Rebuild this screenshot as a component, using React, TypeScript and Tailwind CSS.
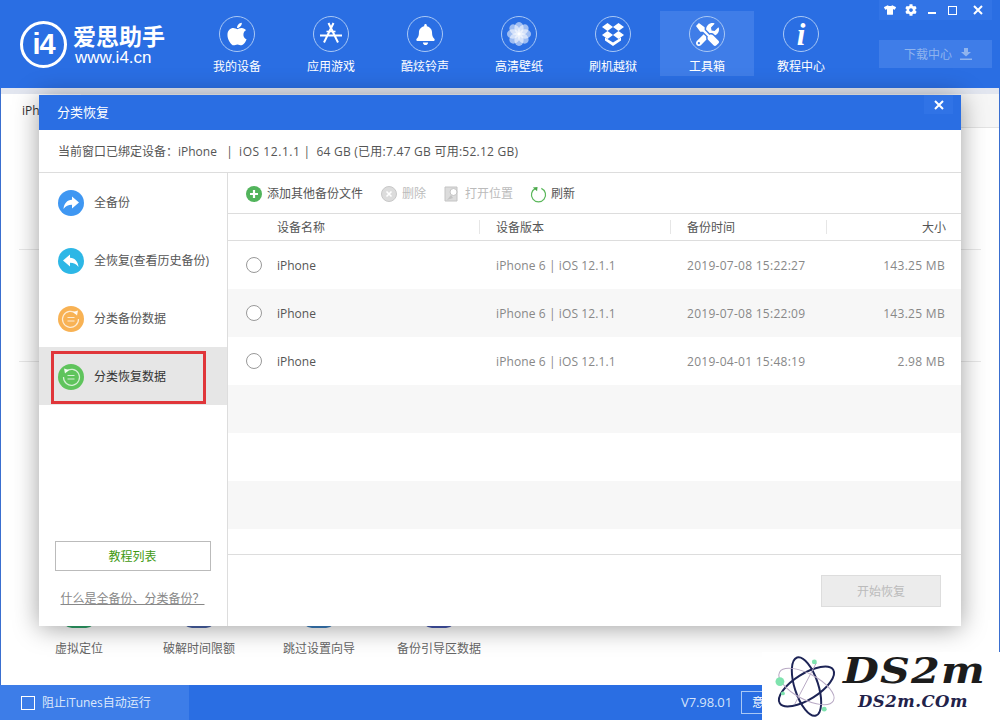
import React from "react";
import { FaApple, FaBell, FaTshirt, FaCog, FaTools } from "react-icons/fa";

const Flower = () => (
  <svg viewBox="0 0 28 28" className="w-[26px] h-[26px]">
    {[0, 45, 90, 135, 180, 225, 270, 315].map((a) => (
      <ellipse key={a} cx="14" cy="7.5" rx="5" ry="6.5" fill="#fff" fillOpacity="0.55" transform={`rotate(${a} 14 14)`} />
    ))}
    <circle cx="14" cy="14" r="1.6" fill="#fff" />
  </svg>
);
const AppStore = () => (
  <svg viewBox="0 0 28 28" className="w-[28px] h-[28px]" fill="none" stroke="#fff" strokeWidth="2">
    <path d="M16.5 3 7 22.5M11.5 3 21 22.5M3 15.5h22" />
    <path d="M9.5 11.5h9" strokeWidth="1.6" />
  </svg>
);
const Box = () => (
  <svg viewBox="0 0 28 28" className="w-[28px] h-[28px]" fill="#fff">
    <path d="M8.5 3 14 7l-5.5 4L3 7zM19.5 3 25 7l-5.5 4L14 7zM3 15l5.5-4L14 15l-5.500 4zM25 15l-5.500-4L14 15l5.500 4z" />
    <path d="M6 20.500v-3l8 5 8-5v3L14 26z" />
  </svg>
);
const Info = () => (
  <span className="text-white italic font-bold text-[31px] leading-none font-['Liberation_Serif',serif]">i</span>
);

const nav: [React.ReactNode, string][] = [
  [<FaApple className="text-white text-[26px]" />, "我的设备"],
  [<AppStore />, "应用游戏"],
  [<FaBell className="text-white text-[21px]" />, "酷炫铃声"],
  [<Flower />, "高清壁纸"],
  [<Box />, "刷机越狱"],
  [<FaTools className="text-white text-[23px]" />, "工具箱"],
  [<Info />, "教程中心"],
];

const Ring = ({ color, flip }: { color: string; flip?: boolean }) => (
  <svg viewBox="0 0 26 26" className="w-[26px] h-[26px] shrink-0">
    <circle cx="13" cy="13" r="13" fill={color} />
    <g fill="none" stroke="#fff" strokeOpacity="0.75" strokeWidth="1.2" transform={flip ? "" : "scale(-1 1) translate(-26 0)"}>
      <path d="M8 7.500A8 8 0 1 1 5.500 13" />
      <path d="M9.500 11.500h7M9.500 15h7" />
    </g>
    <path d={flip ? "M6 4.500l5 1.500-4 3.500z" : "M20 4.500l-5 1.500 4 3.500z"} fill="#fff" fillOpacity="0.9" />
  </svg>
);
const ArrowIcon = ({ color, left }: { color: string; left?: boolean }) => (
  <svg viewBox="0 0 26 26" className="w-[26px] h-[26px] shrink-0">
    <circle cx="13" cy="13" r="13" fill={color} />
    <path
      d="M14 6.500l7 6-7 6v-3.700c-3.800 0-6.300 1.200-8.500 4.200.5-5.500 3.500-9 8.500-9.300z"
      fill="#fff"
      transform={left ? "scale(-1 1) translate(-26 0)" : ""}
    />
  </svg>
);

const side: [React.ReactNode, string, boolean][] = [
  [<ArrowIcon color="#3f97f2" />, "全备份", false],
  [<ArrowIcon color="#2db7e6" left />, "全恢复(查看历史备份)", false],
  [<Ring color="#f8b254" />, "分类备份数据", false],
  [<Ring color="#5fc45c" flip />, "分类恢复数据", true],
];

const rows = [
  ["iPhone", "iPhone 6 | iOS 12.1.1", "2019-07-08 15:22:27", "143.25 MB"],
  ["iPhone", "iPhone 6 | iOS 12.1.1", "2019-07-08 15:22:09", "143.25 MB"],
  ["iPhone", "iPhone 6 | iOS 12.1.1", "2019-04-01 15:48:19", "2.98 MB"],
  null,
  null,
  null,
];

const COLS = "grid grid-cols-[252px_191px_156px_134px]";

export default function App() {
  return (
    <div className="relative w-[1000px] h-[720px] overflow-hidden bg-white flex flex-col text-[12px] text-[#666] font-['Open_Sans','Noto_Sans_CJK_SC',sans-serif]">
      {/* header */}
      <header className="relative h-[88px] shrink-0 bg-[#2a6ee3] flex">
        <div className="w-[190px] shrink-0 flex items-center pl-[20px] pt-[1px] text-white">
          <div className="w-[47px] h-[47px] rounded-full border-[3px] border-white flex items-center justify-center shrink-0">
            <span className="text-[29px] font-bold leading-none font-['Liberation_Sans',sans-serif] tracking-[-1px]">i4</span>
          </div>
          <div className="ml-[6px] flex flex-col">
            <span className="text-[23px] font-bold leading-[26px] whitespace-nowrap font-['Noto_Sans_CJK_SC',sans-serif]">爱思助手</span>
            <span className="text-[17px] leading-[19px] ml-[2px] font-['Liberation_Sans',sans-serif] whitespace-nowrap">www.i4.cn</span>
          </div>
        </div>
        <nav className="flex">
          {nav.map(([icon, label], i) => (
            <div key={label} className={`w-[94px] h-[65px] mt-[11px] flex flex-col items-center ${i === 5 ? "bg-[#3f7de8]" : ""}`}>
              <div className="mt-[5px] w-[36px] h-[36px] rounded-full border border-[#a9c8f5] flex items-center justify-center">{icon}</div>
              <span className="mt-[6px] text-[12px] leading-[18px] text-white whitespace-nowrap">{label}</span>
            </div>
          ))}
        </nav>
        <div className="absolute left-[879px] top-0 w-[113px]">
          <div className="h-[20px] flex bg-[#3274e6] text-white">
            <span className="w-[21px] flex items-center justify-center"><FaTshirt className="text-[12px]" /></span>
            <span className="w-[21px] flex items-center justify-center"><FaCog className="text-[12px]" /></span>
            <span className="w-[21px] flex items-center justify-center"><span className="w-[8px] h-[2px] bg-white mt-[6px]" /></span>
            <span className="w-[21px] flex items-center justify-center"><span className="w-[9px] h-[9px] border-[1.500px] border-white" /></span>
            <span className="flex-1 flex items-center justify-center">
              <svg viewBox="0 0 10 10" className="w-[10px] h-[10px]" stroke="#fff" strokeWidth="2"><path d="M1 1l8 8M9 1l-8 8" /></svg>
            </span>
          </div>
          <div className="mt-[20px] h-[28px] bg-[#3f7de8] flex items-center justify-center gap-[8px] pl-[5px] text-[#8fb4ee]">
            <span className="text-[12px] pt-[2px]">下载中心</span>
            <svg viewBox="0 0 12 12" className="w-[12px] h-[12px]" fill="#8fb4ee"><path d="M4 0h4v4h3L6 8.500 1 4h3zM0 10.500h12V12H0z" /></svg>
          </div>
        </div>
      </header>

      {/* page behind */}
      <main className="flex-1 min-h-0 flex flex-col border-x border-[#3a6fd0]">
        <div className="h-[6px] bg-[#e2e6f0] shrink-0" />
        <div className="h-[34px] shrink-0 bg-[#f6f6f6] border-b border-[#e3e3e3]">
          <div className="w-[80px] h-[34px] bg-white pl-[21px] flex items-center text-[#333]">iPhone</div>
        </div>
        <div className="h-[122px] shrink-0 border-b border-[#e8e8e8] mx-[18px]" />
        <div className="h-[112px] shrink-0 border-b border-[#e8e8e8] mx-[18px]" />
        <div className="mt-[234px] grid grid-cols-[120px_120px_120px_120px] pl-[18px]">
          {[
            ["虚拟定位", "#2fa56b"],
            ["破解时间限额", "#4a63a8"],
            ["跳过设置向导", "#3b7fc0"],
            ["备份引导区数据", "#4557b0"],
          ].map(([t, c]) => (
            <div key={t} className="flex flex-col items-center">
              <div className="w-[34px] h-[32px] rounded-[10px]" style={{ background: c }} />
              <span className="mt-[12px] leading-[18px] text-[#666] whitespace-nowrap">{t}</span>
            </div>
          ))}
        </div>
      </main>

      {/* footer */}
      <footer className="h-[35px] shrink-0 bg-[#2a6ee3] flex items-center text-white">
        <div className="w-[189px] h-full bg-[#3d7de8] flex items-center pl-[21px]">
          <span className="w-[14px] h-[14px] border border-white" />
          <span className="ml-[7px] text-[#dce8fb] whitespace-nowrap">阻止iTunes自动运行</span>
        </div>
        <div className="ml-auto flex items-center mr-[179px]">
          <span className="text-[#d5e3fa] text-[13px] tracking-[-0.1px]">V7.98.01</span>
          <span className="ml-[9px] w-[80px] h-[23px] border border-[#a9c8f5] flex items-center pl-[10px] whitespace-nowrap">意见反馈</span>
        </div>
      </footer>

      {/* dialog */}
      <section className="absolute left-[39px] top-[95px] w-[922px] h-[531px] bg-white flex flex-col shadow-[0_2px_24px_rgba(0,0,0,0.38)]">
        <div className="relative h-[35px] shrink-0 bg-[#2a6ee3] flex items-center pl-[18px] text-white text-[13px]">
          分类恢复
          <div className="absolute right-[8px] top-0 w-[29px] h-[19px] bg-[#3073e6] flex items-center justify-center">
            <svg viewBox="0 0 10 10" className="w-[10px] h-[10px]" stroke="#fff" strokeWidth="2"><path d="M1 1l8 8M9 1l-8 8" /></svg>
          </div>
        </div>
        <div className="h-[43px] shrink-0 border-b border-[#ddd] flex items-center pl-[19px] pt-[2px] text-[#555] whitespace-pre">
          <span>当前窗口已绑定设备：iPhone   |  </span>
          <span className="tracking-[0.55px]">iOS 12.1.1</span>
          <span> |  </span>
          <span className="tracking-[0.25px]">64 GB (已用:7.47 GB 可用:52.12 GB)</span>
        </div>
        <div className="flex-1 min-h-0 flex">
          {/* sidebar */}
          <aside className="w-[189px] shrink-0 border-r border-[#ddd] flex flex-col">
            {side.map(([icon, t, active]) => (
              <div key={t} className={`h-[58px] shrink-0 flex items-center pl-[19px] pt-[2px] gap-[10px] whitespace-nowrap ${active ? "bg-[#e6e6e6] text-[#333]" : "text-[#555]"}`}>
                {icon}
                <span>{t}</span>
              </div>
            ))}
            <div className="mt-auto mb-[18px] flex flex-col items-center">
              <div className="w-[156px] h-[30px] ml-[-1px] pt-[2px] border border-[#bbb] flex items-center justify-center text-[#3f9a12]">教程列表</div>
              <span className="mt-[19px] ml-[-1px] leading-[18px] text-[#888] underline whitespace-nowrap">什么是全备份、分类备份？</span>
            </div>
          </aside>
          {/* right */}
          <div className="flex-1 min-w-0 flex flex-col">
            <div className="h-[41px] shrink-0 border-b border-[#ddd] flex items-center pl-[18px] pt-[2px] whitespace-nowrap">
              <svg viewBox="0 0 16 16" className="w-[16px] h-[16px]"><circle cx="8" cy="8" r="8" fill="#52b45c" /><path d="M8 4v8M4 8h8" stroke="#fff" strokeWidth="2.200" /></svg>
              <span className="ml-[5px] text-[#555]">添加其他备份文件</span>
              <svg viewBox="0 0 16 16" className="ml-[18px] w-[16px] h-[16px]"><circle cx="8" cy="8" r="7.500" fill="#dcdcdc" stroke="#c8c8c8" /><path d="M5.500 5.500l5 5M10.500 5.500l-5 5" stroke="#fff" strokeWidth="1.600" /></svg>
              <span className="ml-[5px] text-[#bbb]">删除</span>
              <svg viewBox="0 0 16 16" className="ml-[18px] w-[16px] h-[16px]"><path d="M1 1h12v14H1z" fill="#dcdcdc" stroke="#c4c4c4" /><circle cx="9.500" cy="6" r="3.500" fill="#fff" stroke="#c4c4c4" /><path d="M3 14l4-5 2 3z" fill="#c4c4c4" /></svg>
              <span className="ml-[5px] text-[#bbb]">打开位置</span>
              <svg viewBox="0 0 18 18" className="ml-[17px] w-[17px] h-[17px]" fill="none"><path d="M6 2.500A7.500 7.500 0 1 0 12 2.500" stroke="#5cb85c" strokeWidth="1.300" /><path d="M3 1.500l5-.5-.5 4.500z" fill="#4aa84a" /></svg>
              <span className="ml-[4px] text-[#555]">刷新</span>
            </div>
            <div className={`${COLS} h-[27px] pt-[2px] shrink-0 border-b border-[#ddd] items-center text-[#555]`}>
              <div className="pl-[49px] relative h-full flex items-center">设备名称<i className="absolute right-0 top-[4px] h-[14px] w-px bg-[#e6e6e6]" /></div>
              <div className="pl-[16px] relative h-full flex items-center">设备版本<i className="absolute right-0 top-[4px] h-[14px] w-px bg-[#e6e6e6]" /></div>
              <div className="pl-[16px] relative h-full flex items-center">备份时间<i className="absolute right-0 top-[4px] h-[14px] w-px bg-[#e6e6e6]" /></div>
              <div className="pr-[15px] text-right">大小</div>
            </div>
            {rows.map((r, i) => (
              <div key={i} className={`${COLS} h-[48px] pt-[2px] shrink-0 items-center ${i % 2 === 1 ? "bg-[#f7f7f7]" : "bg-white"}`}>
                {r && (
                  <>
                    <div className="flex items-center pl-[18px]">
                      <span className="w-[16px] h-[16px] mt-[-2px] rounded-full border border-[#999] bg-white" />
                      <span className="ml-[15px] text-[#555]">{r[0]}</span>
                    </div>
                    <div className="pl-[16px] text-[#888] tracking-[0.1px]">{r[1]}</div>
                    <div className="pl-[16px] text-[#888] tracking-[0.27px]">{r[2]}</div>
                    <div className="pr-[16px] text-right text-[#888] tracking-[0.3px]">{r[3]}</div>
                  </>
                )}
              </div>
            ))}
            <div className="mt-[25px] flex-1 border-t border-[#ddd] flex justify-end items-start pt-[20px] pr-[20px]">
              <div className="w-[120px] h-[32px] pt-[2px] bg-[#ececec] border border-[#ddd] flex items-center justify-center text-[#bbb]">开始恢复</div>
            </div>
          </div>
        </div>
      </section>

      {/* annotation */}
      <div className="absolute left-[51px] top-[351px] w-[155px] h-[53px] border-[3px] border-[#e0363a]" />

      {/* watermark */}
      <div className="absolute left-[762px] top-[652px] w-[238px] h-[68px] bg-white flex">
        <svg viewBox="0 0 64 64" className="ml-[13px] mt-[3px] w-[63px] h-[63px] shrink-0" fill="none">
          <g stroke="#1d2456" strokeWidth="2">
            <ellipse cx="32" cy="32" rx="32" ry="13" transform="rotate(-32 32 32)" />
            <ellipse cx="32" cy="32" rx="31" ry="12" transform="rotate(72 32 32)" />
          </g>
          <ellipse cx="32" cy="32" rx="31" ry="13" transform="rotate(28 32 32)" stroke="#b8a9c4" strokeWidth="1" />
          <path d="M42 8 L20 50" stroke="#b8a9c4" strokeWidth="1" />
          <circle cx="5" cy="27" r="4.500" fill="#7fe3ae" />
          <circle cx="40" cy="7" r="2.500" fill="#7fe3ae" />
          <circle cx="8" cy="39" r="2" fill="#7fe3ae" />
          <circle cx="50" cy="55" r="2.500" fill="#7fe3ae" />
        </svg>
        <div className="ml-[5px] flex flex-col items-start italic font-bold text-[#1c1c1c] font-['DejaVu_Serif',serif] whitespace-nowrap">
          <span className="text-[35px] leading-[36px] tracking-[1px] mt-[1px] origin-left scale-x-[1.18]">DS2m</span>
          <span className="ml-[15px] mt-[1px] text-[16.500px] leading-[24px] tracking-[0.500px] text-[#22224a]">DS2m.COm</span>
        </div>
      </div>
    </div>
  );
}
